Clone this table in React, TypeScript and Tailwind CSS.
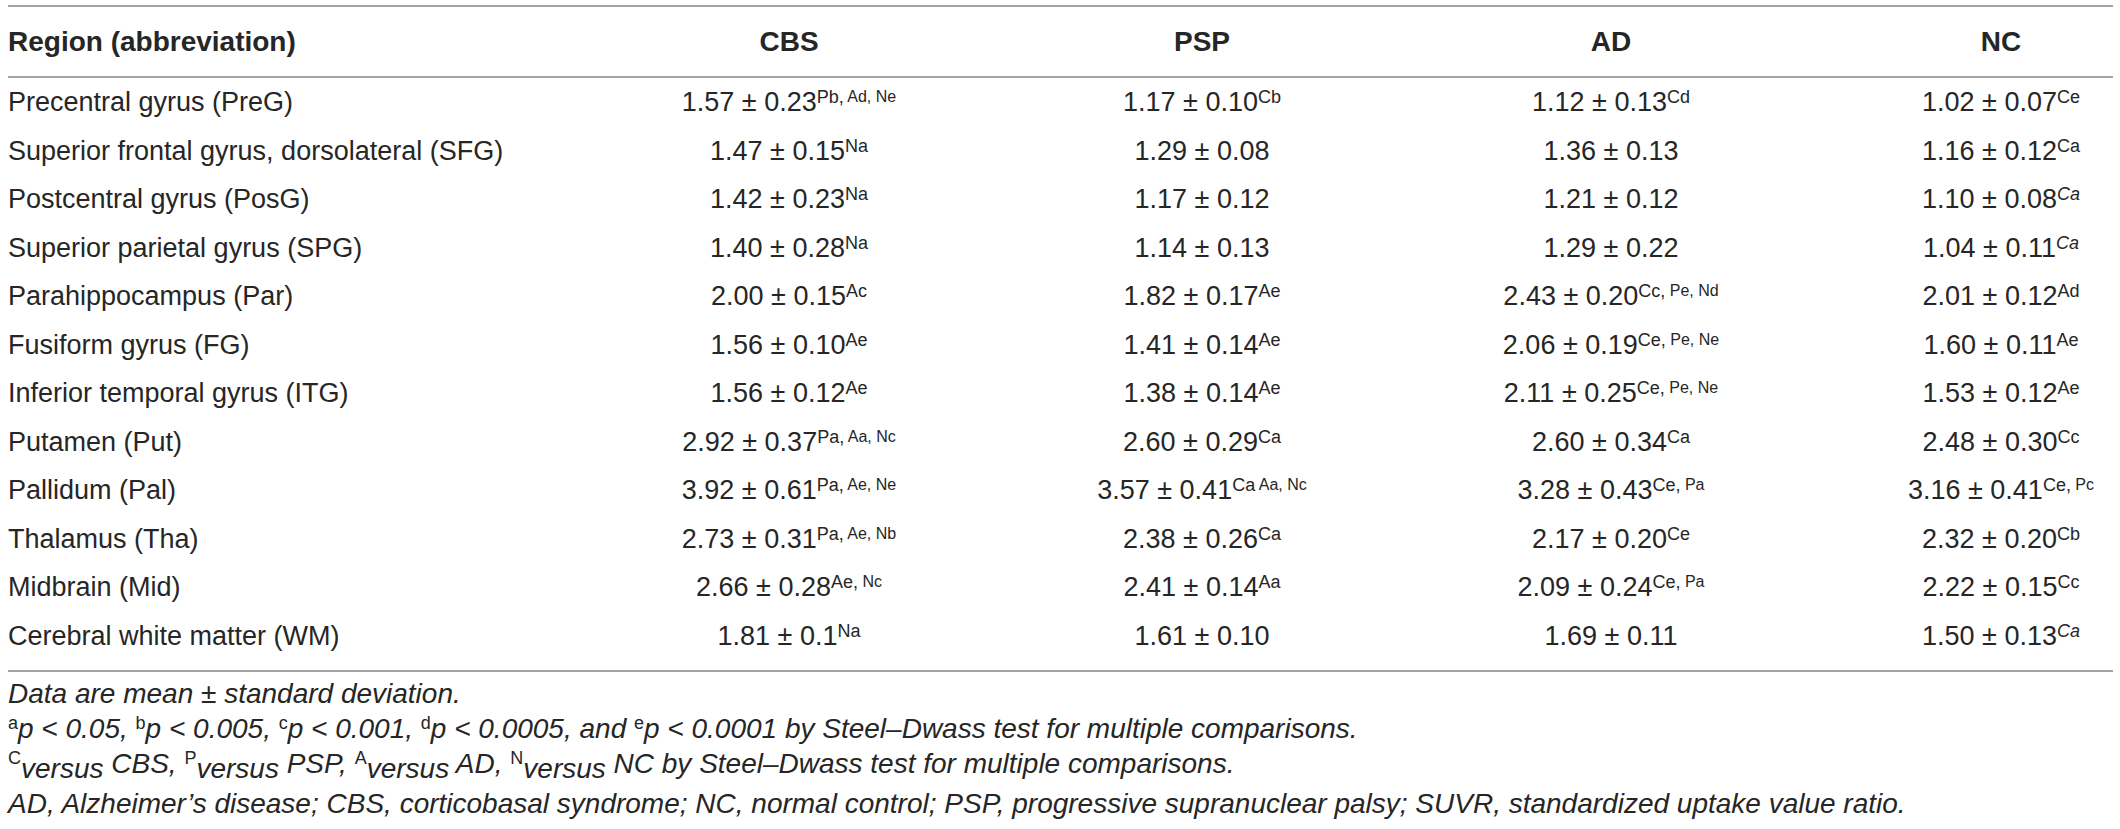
type Cell = { v: string; s?: string; r?: string; it?: boolean };

const rows: { name: string; cells: Cell[] }[] = [
  { name: "Precentral gyrus (PreG)", cells: [{ v: "1.57 ± 0.23", s: "Pb,", r: " Ad, Ne" }, { v: "1.17 ± 0.10", s: "Cb" }, { v: "1.12 ± 0.13", s: "Cd" }, { v: "1.02 ± 0.07", s: "Ce" }] },
  { name: "Superior frontal gyrus, dorsolateral (SFG)", cells: [{ v: "1.47 ± 0.15", s: "Na" }, { v: "1.29 ± 0.08" }, { v: "1.36 ± 0.13" }, { v: "1.16 ± 0.12", s: "Ca" }] },
  { name: "Postcentral gyrus (PosG)", cells: [{ v: "1.42 ± 0.23", s: "Na" }, { v: "1.17 ± 0.12" }, { v: "1.21 ± 0.12" }, { v: "1.10 ± 0.08", s: "Ca", it: true }] },
  { name: "Superior parietal gyrus (SPG)", cells: [{ v: "1.40 ± 0.28", s: "Na" }, { v: "1.14 ± 0.13" }, { v: "1.29 ± 0.22" }, { v: "1.04 ± 0.11", s: "Ca", it: true }] },
  { name: "Parahippocampus (Par)", cells: [{ v: "2.00 ± 0.15", s: "Ac" }, { v: "1.82 ± 0.17", s: "Ae" }, { v: "2.43 ± 0.20", s: "Cc,", r: " Pe, Nd" }, { v: "2.01 ± 0.12", s: "Ad" }] },
  { name: "Fusiform gyrus (FG)", cells: [{ v: "1.56 ± 0.10", s: "Ae" }, { v: "1.41 ± 0.14", s: "Ae" }, { v: "2.06 ± 0.19", s: "Ce,", r: " Pe, Ne" }, { v: "1.60 ± 0.11", s: "Ae" }] },
  { name: "Inferior temporal gyrus (ITG)", cells: [{ v: "1.56 ± 0.12", s: "Ae" }, { v: "1.38 ± 0.14", s: "Ae" }, { v: "2.11 ± 0.25", s: "Ce,", r: " Pe, Ne" }, { v: "1.53 ± 0.12", s: "Ae" }] },
  { name: "Putamen (Put)", cells: [{ v: "2.92 ± 0.37", s: "Pa,", r: " Aa, Nc" }, { v: "2.60 ± 0.29", s: "Ca" }, { v: "2.60 ± 0.34", s: "Ca" }, { v: "2.48 ± 0.30", s: "Cc" }] },
  { name: "Pallidum (Pal)", cells: [{ v: "3.92 ± 0.61", s: "Pa,", r: " Ae, Ne" }, { v: "3.57 ± 0.41", s: "Ca", r: " Aa, Nc" }, { v: "3.28 ± 0.43", s: "Ce,", r: " Pa" }, { v: "3.16 ± 0.41", s: "Ce,", r: " Pc" }] },
  { name: "Thalamus (Tha)", cells: [{ v: "2.73 ± 0.31", s: "Pa,", r: " Ae, Nb" }, { v: "2.38 ± 0.26", s: "Ca" }, { v: "2.17 ± 0.20", s: "Ce" }, { v: "2.32 ± 0.20", s: "Cb" }] },
  { name: "Midbrain (Mid)", cells: [{ v: "2.66 ± 0.28", s: "Ae,", r: " Nc" }, { v: "2.41 ± 0.14", s: "Aa" }, { v: "2.09 ± 0.24", s: "Ce,", r: " Pa" }, { v: "2.22 ± 0.15", s: "Cc" }] },
  { name: "Cerebral white matter (WM)", cells: [{ v: "1.81 ± 0.1", s: "Na" }, { v: "1.61 ± 0.10" }, { v: "1.69 ± 0.11" }, { v: "1.50 ± 0.13", s: "Ca", it: true }] },
];

const grid = "grid grid-cols-[499px_564px_262px_556px_224px] items-center";

function Value({ c }: { c: Cell }) {
  return (
    <span className="whitespace-pre">
      {c.v}
      {c.s && (
        <span className={`align-[8px] text-[18px] leading-none ${c.it ? "italic" : ""}`}>{c.s}</span>
      )}
      {c.r && <span className="align-[9px] text-[16px] leading-none">{c.r}</span>}
    </span>
  );
}

function Sup({ t }: { t: string }) {
  return <span className="align-[9px] text-[18px] not-italic leading-none">{t}</span>;
}

function Versus() {
  return <span className="align-[-5px]">versus</span>;
}

export default function App() {
  return (
    <div className="h-[829px] w-[2120px] overflow-hidden bg-white pl-[8px] pr-[7px] font-['Liberation_Sans',Arial,sans-serif] text-[#262626]">
      <div className="mt-[5px] h-[2px] bg-[#a3a3a3]" />
      <div className={`${grid} h-[69px] text-[28px] font-bold`}>
        <div>Region (abbreviation)</div>
        <div className="text-center">CBS</div>
        <div className="text-center">PSP</div>
        <div className="text-center">AD</div>
        <div className="text-center">NC</div>
      </div>
      <div className="h-[2px] bg-[#a3a3a3]" />
      <div className="text-[27px]">
        {rows.map((row) => (
          <div key={row.name} className={`${grid} h-[48.5px]`}>
            <div className="whitespace-nowrap">{row.name}</div>
            {row.cells.map((c, i) => (
              <div key={i} className="text-center">
                <Value c={c} />
              </div>
            ))}
          </div>
        ))}
      </div>
      <div className="mt-[10px] h-[2px] bg-[#a3a3a3]" />
      <div className="pt-[4px] text-[28px] leading-[35px] italic">
        <p>Data are mean ± standard deviation.</p>
        <p>
          <Sup t="a" />p &lt; 0.05, <Sup t="b" />p &lt; 0.005, <Sup t="c" />p &lt; 0.001, <Sup t="d" />p &lt; 0.0005, and <Sup t="e" />p &lt; 0.0001 by Steel–Dwass test for multiple comparisons.
        </p>
        <p>
          <Sup t="C" />
          <Versus /> CBS, <Sup t="P" />
          <Versus /> PSP, <Sup t="A" />
          <Versus /> AD, <Sup t="N" />
          <Versus /> NC by Steel–Dwass test for multiple comparisons.
        </p>
        <p>
          AD, Alzheimer’s disease; CBS, corticobasal syndrome; NC, normal control; PSP, progressive supranuclear palsy; SUVR, standardized uptake value ratio.
        </p>
      </div>
    </div>
  );
}
